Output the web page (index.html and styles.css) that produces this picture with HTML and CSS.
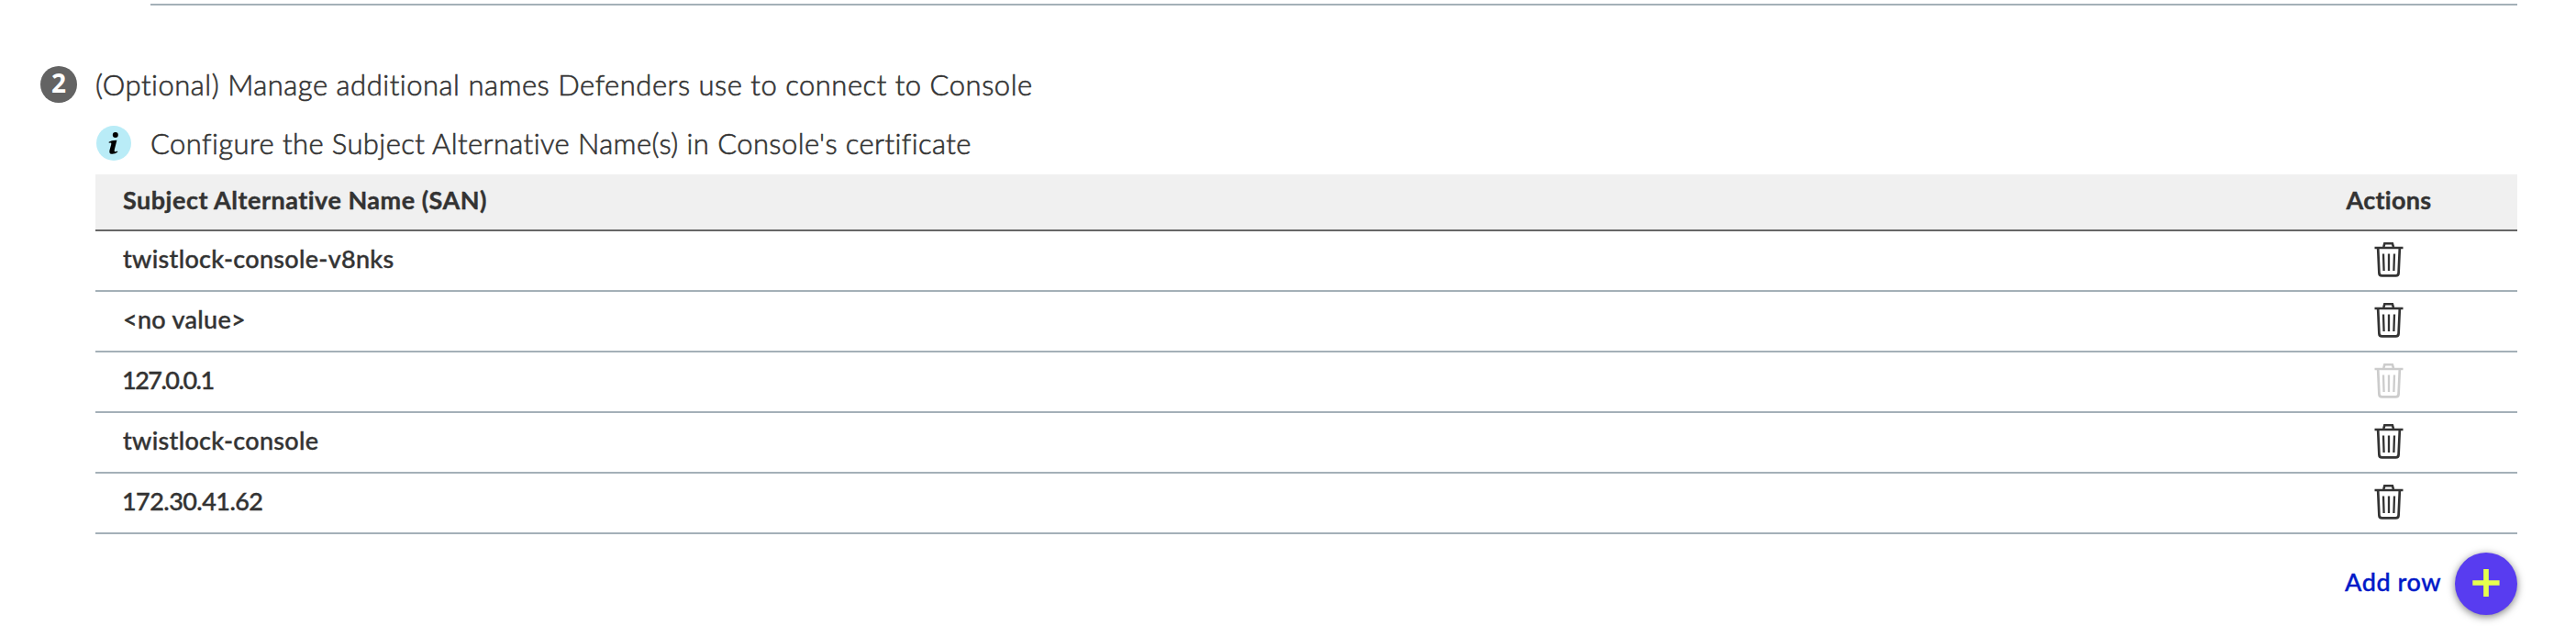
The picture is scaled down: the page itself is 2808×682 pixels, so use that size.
FILE: index.html
```html
<!DOCTYPE html>
<html lang="en">
<head>
<meta charset="utf-8">
<title>Defender names</title>
<link rel="stylesheet" href="styles.css">
</head>
<body>
<svg class="sprite" aria-hidden="true">
  <symbol id="trash" viewBox="0 0 32 40">
    <path d="M10.3 6 L11.3 2.3 H19.9 L21 6" fill="none" stroke="currentColor" stroke-width="2.6"/>
    <path d="M.5 7 H31.5" fill="none" stroke="currentColor" stroke-width="2.5"/>
    <path d="M4.2 8 L5.4 34.4 Q5.5 37.4 8.5 37.4 H23.5 Q26.5 37.4 26.6 34.4 L27.8 8" fill="none" stroke="currentColor" stroke-width="2.7"/>
    <path d="M10 13.5 L10.6 32 M16 13.5 V32 M22 13.5 L21.4 32" fill="none" stroke="currentColor" stroke-width="2.3"/>
  </symbol>
</svg>
<main class="page">
  <hr class="divider">
  <section class="step">
    <span class="step-number">2</span>
    <div class="step-body">
      <h2 class="step-title">(Optional) Manage additional names Defenders use to connect to Console</h2>
      <p class="note">
        <svg class="info" viewBox="0 0 38 38"><circle cx="19" cy="19" r="19" fill="#b9ecf7"/><circle cx="20.8" cy="10" r="3"/><path d="M13.6 17.8 C15.4 16.4 18 16 22.4 15.8 L19.8 26 Q19.2 28.4 20.5 28.3 Q21.4 28.2 22.9 27.4 L23.3 28.6 C21.4 30.2 18.8 31 16.8 30.8 C14.3 30.5 14 28.6 14.5 26.4 L16.3 20 Q16.8 18 13.8 18.8 Z"/></svg>
        <span class="note-text">Configure the Subject Alternative Name(s) in Console's certificate</span>
      </p>
      <div class="table">
        <div class="row head"><span class="name">Subject Alternative Name (SAN)</span><span class="action"><span class="action-label">Actions</span></span></div>
        <div class="row"><span class="name">twistlock-console-v8nks</span><span class="action"><svg class="trash"><use href="#trash"/></svg></span></div>
        <div class="row"><span class="name">&lt;no value&gt;</span><span class="action"><svg class="trash"><use href="#trash"/></svg></span></div>
        <div class="row"><span class="name loopback">127.0.0.1</span><span class="action"><svg class="trash disabled"><use href="#trash"/></svg></span></div>
        <div class="row"><span class="name">twistlock-console</span><span class="action"><svg class="trash"><use href="#trash"/></svg></span></div>
        <div class="row"><span class="name ip">172.30.41.62</span><span class="action"><svg class="trash"><use href="#trash"/></svg></span></div>
      </div>
      <div class="footer">
        <span class="add-label">Add row</span>
        <button class="add" aria-label="Add row"><svg viewBox="0 0 68 68"><path d="M34 18 V48 M19.3 33 H48.6" stroke="#e6ff4d" stroke-width="5.7"/></svg></button>
      </div>
    </div>
  </section>
</main>
</body>
</html>
```
FILE: styles.css
```css
* { box-sizing: border-box; }
body { margin: 0; background: #fff; color: #333; font-family: Lato, sans-serif; overflow: hidden; }
.sprite { display: none; }
.page { height: 682px; padding: 4px 64px 0 44px; }
.divider { height: 2px; margin: 0 0 0 120px; border: 0; background: #a4b0b8; }
.step { display: flex; padding-top: 66px; }
.step-number { flex: none; width: 40px; height: 40px; margin-right: 20px; border-radius: 50%; background: #636363; color: #fff; font: 700 28px/36px "Open Sans", sans-serif; text-align: center; }
.step-body { flex: 1; }
.step-title { margin: 0; height: 65px; font-size: 31px; font-weight: 300; line-height: 41px; letter-spacing: .51px; -webkit-text-stroke: .6px #333; }
.note { display: flex; margin: 0; height: 53px; }
.info { width: 38px; height: 38px; margin-left: 1px; }
.note-text { margin-left: 21px; font-size: 31px; font-weight: 300; line-height: 39px; letter-spacing: .41px; -webkit-text-stroke: .6px #333; }
.row { display: flex; align-items: center; height: 66px; border-bottom: 2px solid #a4b0b8; font-size: 27px; font-weight: 500; letter-spacing: .3px; -webkit-text-stroke: .4px; }
.head { height: 62px; background: #f0f0f0; border-color: #666; font-weight: 700; letter-spacing: .5px; }
.name { padding: 0 0 5px 30px; }
.loopback { letter-spacing: -1.5px; padding-left: 29px; }
.ip { letter-spacing: -.55px; padding-left: 29px; }
.action { display: flex; justify-content: center; width: 280px; margin-left: auto; }
.action-label { padding-bottom: 5px; letter-spacing: .3px; }
.trash { width: 32px; height: 40px; margin-bottom: 2px; color: #333; }
.disabled { color: #ccc; }
.footer { display: flex; justify-content: flex-end; align-items: center; padding-top: 20px; }
.add-label { margin-right: 15px; padding-bottom: 5px; color: #0019c8; font-size: 27px; font-weight: 500; letter-spacing: .55px; -webkit-text-stroke: .4px; }
.add { width: 68px; height: 68px; padding: 0; border: 0; border-radius: 50%; background: #583cf0; box-shadow: 0 2px 8px rgba(0,0,0,.5); }
.add svg { display: block; }
```
